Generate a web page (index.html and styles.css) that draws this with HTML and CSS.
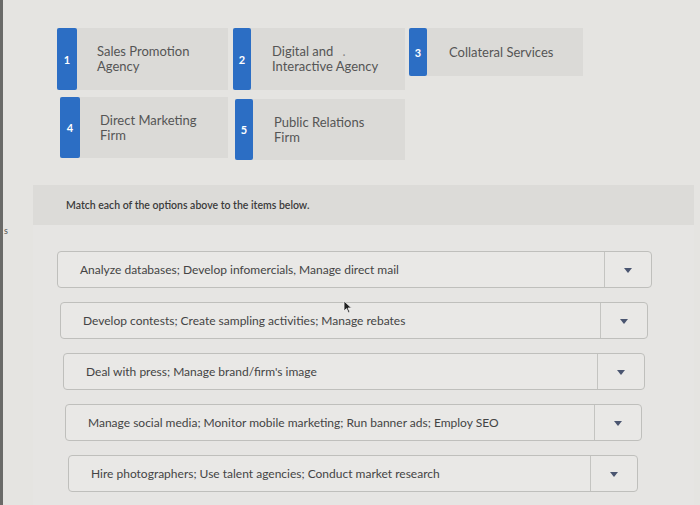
FILE: index.html
```html
<!DOCTYPE html>
<html>
<head>
<meta charset="utf-8">
<link rel="stylesheet" href="styles.css">
</head>
<body>
<div class="page">
  <div class="edge"></div>
  <div class="main">
    <div class="options">
      <div class="opt-row">
        <div class="card c1"><div class="badge">1</div><div class="card-text"><div>Sales Promotion<br>Agency</div></div></div>
        <div class="card c2"><div class="badge">2</div><div class="card-text"><div>Digital and <span class="dot">.</span><br>Interactive Agency</div></div></div>
        <div class="card c3"><div class="badge">3</div><div class="card-text"><div>Collateral Services</div></div></div>
      </div>
      <div class="opt-row second">
        <div class="card c4"><div class="badge">4</div><div class="card-text"><div>Direct Marketing<br>Firm</div></div></div>
        <div class="card c5"><div class="badge">5</div><div class="card-text"><div>Public Relations<br>Firm</div></div></div>
      </div>
    </div>
    <div class="lower">
      <div class="gutter"><span class="cut">s</span></div>
      <div class="panel">
        <div class="band">Match each of the options above to the items below.</div>
        <div class="rows">
          <div class="row r1"><div class="row-text">Analyze databases; Develop infomercials, Manage direct mail</div><div class="row-drop"><span class="tri"></span></div></div>
          <div class="row r2"><div class="row-text">Develop contests; Create sampling activities; Manage rebates</div><div class="row-drop"><span class="tri"></span></div>
            <svg class="cursor" width="10" height="14" viewBox="0 0 10 14"><path d="M1 1 L1 11 L3.5 8.6 L5.5 13 L7 12.3 L5 8 L8.5 8 Z" fill="#222" stroke="#f2f2f2" stroke-width="0.8"/></svg>
          </div>
          <div class="row r3"><div class="row-text">Deal with press; Manage brand/firm's image</div><div class="row-drop"><span class="tri"></span></div></div>
          <div class="row r4"><div class="row-text">Manage social media; Monitor mobile marketing; Run banner ads; Employ SEO</div><div class="row-drop"><span class="tri"></span></div></div>
          <div class="row r5"><div class="row-text">Hire photographers; Use talent agencies; Conduct market research</div><div class="row-drop"><span class="tri"></span></div></div>
        </div>
      </div>
    </div>
  </div>
</div>
</body>
</html>
```

FILE: styles.css
```css
html, body {
  margin: 0;
  padding: 0;
}
body {
  background: #e5e4e1;
  font-family: Lato, "Liberation Sans", sans-serif;
  color: #4f4f4f;
}
.page {
  display: flex;
  width: 700px;
  height: 505px;
  overflow: hidden;
}
.edge {
  width: 3px;
  background: #6a6a68;
  flex: none;
}
.main {
  flex: 1;
  display: flex;
  flex-direction: column;
}
.options {
  padding-top: 28px;
  padding-left: 54px;
}
.opt-row {
  display: flex;
  gap: 5px;
}
.opt-row.second {
  margin-top: 7px;
  padding-left: 3px;
  gap: 7px;
}
.card {
  display: flex;
  height: 62px;
  background: #dbdad7;
}
.c1 { width: 171px; }
.c2 { width: 172px; }
.c3 { width: 174px; height: 48px; margin-left: -1px; }
.c4 { width: 168px; height: 61px; }
.c5 { width: 170px; height: 61px; margin-top: 2px; }
.badge {
  width: 20px;
  flex: none;
  background: #2c6ec4;
  border-radius: 2px;
  color: #fff;
  font-weight: 700;
  font-size: 11px;
  display: flex;
  align-items: center;
  justify-content: center;
}
.c2 .badge, .c3 .badge, .c5 .badge { width: 18px; }
.card-text {
  padding-left: 20px;
  font-size: 13px;
  line-height: 15px;
  display: flex;
  align-items: center;
  color: #555;
  white-space: nowrap;
}
.c2 .card-text, .c5 .card-text { padding-left: 21px; }
.c3 .card-text { padding-left: 22px; }
.dot { color: #888; margin-left: 6px; }
.lower {
  display: flex;
  margin-top: 25px;
  flex: 1;
}
.gutter {
  width: 30px;
  flex: none;
}
.cut {
  display: block;
  margin-top: 40px;
  margin-left: 1px;
  font-size: 9px;
  color: #555;
}
.panel {
  flex: 1;
  margin-right: 6px;
  background: #e6e5e3;
  display: flex;
  flex-direction: column;
}
.band {
  height: 40px;
  background: #dcdbd8;
  padding-left: 33px;
  display: flex;
  align-items: center;
  font-size: 10.5px;
  font-weight: 600;
  color: #3a3a3a;
}
.rows {
  display: flex;
  flex-direction: column;
  gap: 14px;
  padding-top: 26px;
}
.row {
  position: relative;
  display: flex;
  height: 35px;
  border: 1px solid #bfbfbc;
  border-radius: 4px;
  background: #e9e8e6;
}
.r1 { margin-left: 24px; width: 593px; }
.r2 { margin-left: 27px; width: 586px; }
.r3 { margin-left: 30px; width: 580px; }
.r4 { margin-left: 32px; width: 575px; }
.r5 { margin-left: 35px; width: 568px; }
.row-text {
  flex: 1;
  display: flex;
  align-items: center;
  padding-left: 22px;
  font-size: 12px;
  color: #444;
  border-right: 1px solid #c4c4c1;
}
.row-drop {
  width: 46px;
  flex: none;
  display: flex;
  align-items: center;
  justify-content: center;
}
.tri {
  width: 0;
  height: 0;
  border-left: 4px solid transparent;
  border-right: 4px solid transparent;
  border-top: 5px solid #4a5570;
  margin-top: 2px;
}
.cursor {
  position: absolute;
  left: 282px;
  top: -3px;
}
```
